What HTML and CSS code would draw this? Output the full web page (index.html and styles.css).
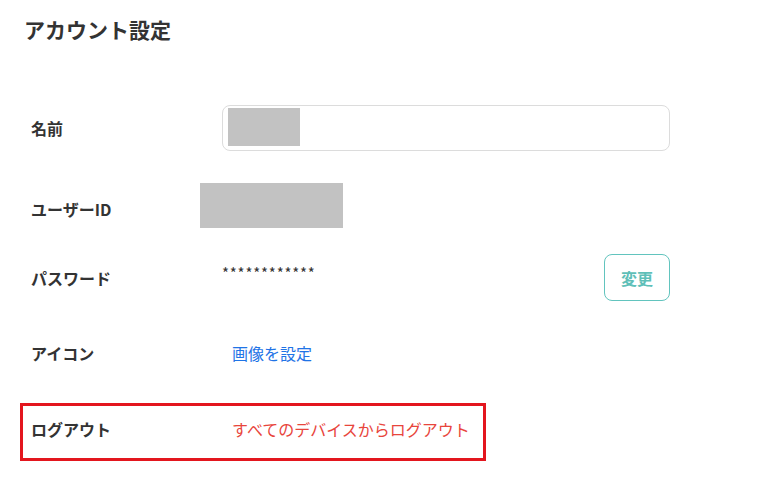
FILE: index.html
```html
<!DOCTYPE html>
<html lang="ja">
<head>
<meta charset="utf-8">
<title>アカウント設定</title>
<link rel="stylesheet" href="styles.css">
</head>
<body>
<main class="page">
  <h1 class="page-title">アカウント設定</h1>

  <section class="settings">
    <div class="row row-name">
      <div class="label">名前</div>
      <div class="field">
        <div class="text-input"><span class="masked masked-name"></span></div>
      </div>
    </div>

    <div class="row row-userid">
      <div class="label">ユーザーID</div>
      <div class="field field-userid">
        <span class="masked masked-userid"></span>
      </div>
    </div>

    <div class="row row-password">
      <div class="label">パスワード</div>
      <div class="field field-password">
        <span class="password-dots">************</span>
        <button class="btn-outline" type="button">変更</button>
      </div>
    </div>

    <div class="row row-icon">
      <div class="label">アイコン</div>
      <div class="field">
        <a class="link" href="#">画像を設定</a>
      </div>
    </div>

    <div class="row row-logout">
      <div class="label">ログアウト</div>
      <div class="field">
        <a class="link link-danger" href="#">すべてのデバイスからログアウト</a>
      </div>
    </div>
  </section>
</main>
</body>
</html>
```

FILE: styles.css
```css
* {
  box-sizing: border-box;
}

html, body {
  margin: 0;
  padding: 0;
  background: #ffffff;
}

body {
  font-family: "Noto Sans CJK JP", "Noto Sans", sans-serif;
  color: #333333;
}

.page {
  padding: 14px 0 0 24px;
}

.page-title {
  margin: 0;
  font-size: 21px;
  line-height: 30px;
  font-weight: 700;
  color: #333333;
}

.settings {
  display: flex;
  flex-direction: column;
  margin-top: 61px;
  margin-left: 7px;
  width: 639px;
}

.row {
  display: grid;
  grid-template-columns: 191px 448px;
  align-items: center;
}

.label {
  font-size: 16px;
  font-weight: 700;
  line-height: 24px;
  color: #333333;
}

.field {
  display: flex;
  align-items: center;
  height: 100%;
}

/* name */
.row-name {
  height: 46px;
}

.text-input {
  width: 448px;
  height: 46px;
  border: 1px solid #dcdcdc;
  border-radius: 8px;
  padding: 2px 5px;
}

.masked {
  display: block;
  background: #c2c2c2;
}

.masked-name {
  width: 72px;
  height: 38px;
}

/* user id */
.row-userid {
  margin-top: 32px;
  height: 52px;
}

.field-userid {
  align-items: flex-start;
}

.masked-userid {
  width: 143px;
  height: 45px;
  margin-left: -22px;
}

/* password */
.row-password {
  margin-top: 19px;
  height: 47px;
}

.field-password {
  justify-content: space-between;
}

.password-dots {
  font-size: 15px;
  line-height: 20px;
  letter-spacing: 0.8px;
  margin-top: -9px;
  color: #333333;
}

.btn-outline {
  width: 66px;
  height: 47px;
  padding: 0;
  border: 1.5px solid #62c4be;
  border-radius: 8px;
  background: #ffffff;
  color: #5fbfb8;
  font-family: inherit;
  font-size: 16px;
  font-weight: 700;
  cursor: pointer;
}

/* icon */
.row-icon {
  margin-top: 37px;
  height: 30px;
}

.link {
  padding-left: 10px;
  font-size: 16px;
  line-height: 24px;
  color: #1f74e6;
  text-decoration: none;
}

/* logout */
.row-logout {
  margin-top: 35px;
  margin-left: -11px;
  width: 466px;
  height: 58px;
  padding: 0 0 7px 8px;
  border: 3px solid #e3161e;
  grid-template-columns: 191px auto;
}

.link-danger {
  color: #e8453c;
}
```
